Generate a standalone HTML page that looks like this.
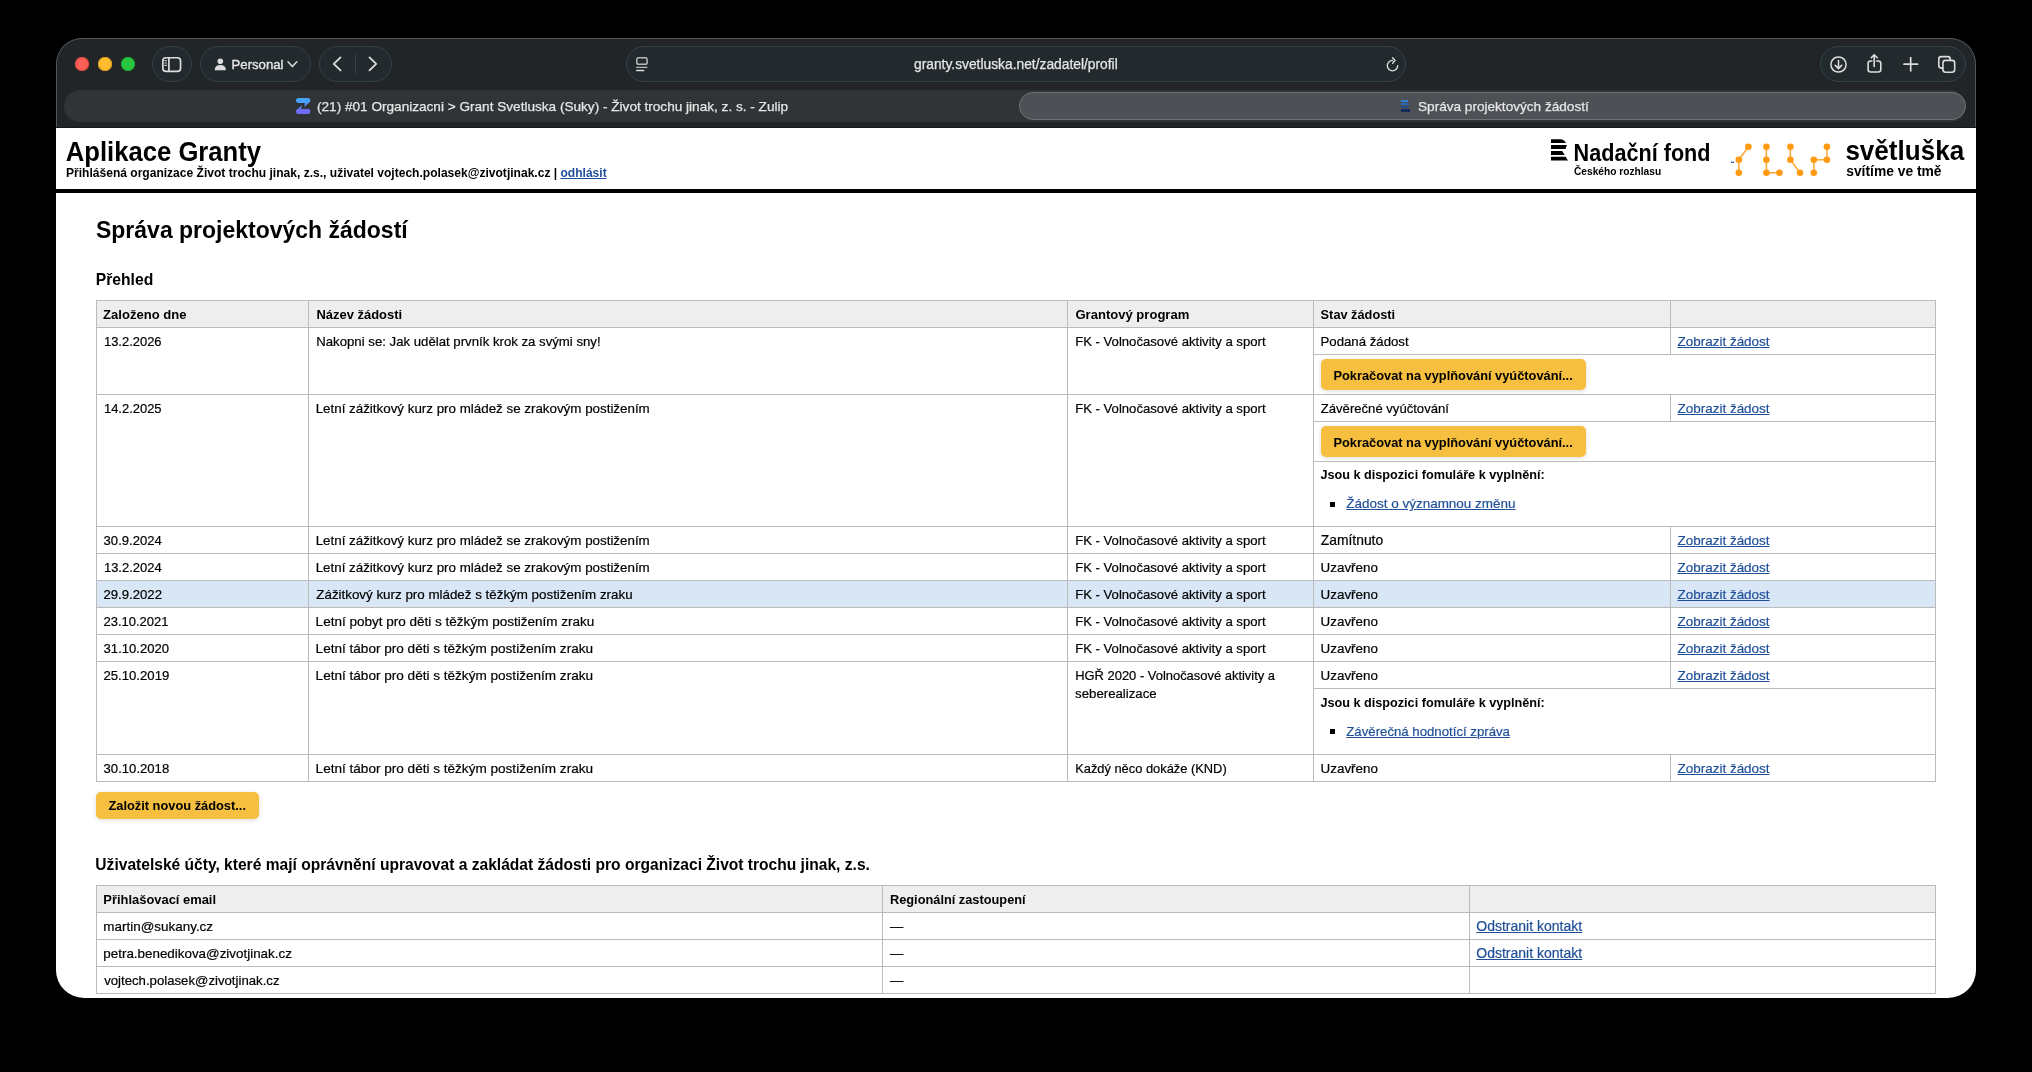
<!DOCTYPE html>
<html><head><meta charset="utf-8">
<style>
*{box-sizing:border-box;margin:0;padding:0}
html,body{width:2032px;height:1072px;background:#000;overflow:hidden;font-family:"Liberation Sans",sans-serif}
.win{will-change:transform;position:absolute;left:56px;top:38px;width:1920px;height:960px;border-radius:26px 26px 28px 28px;overflow:hidden;background:#212528}
.chrome{position:absolute;left:0;top:0;width:1920px;height:100px;background:#212528;box-shadow:inset 0 1px 0 #54585b,inset 1px 0 0 #54585b,inset -1px 0 0 #54585b;border-radius:26px 26px 0 0}
.pill{position:absolute;border:1px solid #34414a;background:#232a2d;border-radius:18px;top:8px;height:36px}
.dot{position:absolute;width:14px;height:14px;border-radius:50%;top:19px}
.content{position:absolute;left:0;top:90px;width:1920px;height:870px;background:#fff}
.a{position:absolute;white-space:nowrap}
svg{position:absolute;overflow:visible}
.ct{color:#e6e6e6;font-size:13.6px;-webkit-text-stroke:0.25px #e6e6e6}
.t{position:absolute;white-space:nowrap;color:#000}
.lk{color:#1f4f98;text-decoration:underline;text-underline-offset:1px}
.r{position:absolute}
.btn{position:absolute;background:#f6bf3f;box-shadow:0 1px 5px rgba(0,0,0,.14)}
</style></head><body>
<div class="win">
  <div class="chrome">
    <div class="dot" style="left:19px;background:#fe5f57;box-shadow:inset 0 0 0 1px #e2463f"></div>
    <div class="dot" style="left:42px;background:#febc2e;box-shadow:inset 0 0 0 1px #dfa023"></div>
    <div class="dot" style="left:65px;background:#28c840;box-shadow:inset 0 0 0 1px #1dad2b"></div>
    <div class="pill" style="left:96px;width:40px"></div>
    <div class="pill" style="left:144px;width:111px"></div>
    <div class="pill" style="left:263px;width:73px"></div>
    <div class="pill" style="left:570px;width:780px"></div>
    <div class="pill" style="left:1764px;width:146px"></div>
    <!-- tab strip -->
    <div style="position:absolute;left:8px;top:52px;width:1902px;height:32px;border-radius:16px;background:#303437"></div>
    <div style="position:absolute;left:963px;top:54px;width:947px;height:28px;border-radius:14px;background:#4d5054;border:1px solid #6c7176"></div>

    <svg width="1920" height="90" style="left:0;top:0" fill="none" stroke="#dcdcdc" stroke-linecap="round" stroke-linejoin="round">
      <!-- sidebar -->
      <rect x="106.85" y="19.75" width="17.7" height="13.6" rx="3.2" stroke-width="1.7"/>
      <line x1="112.9" y1="20" x2="112.9" y2="33" stroke-width="1.7"/>
      <g stroke-width="1.1" stroke="#bdbdbd"><line x1="108.8" y1="22.6" x2="110.6" y2="22.6"/><line x1="108.8" y1="25" x2="110.6" y2="25"/><line x1="108.8" y1="27.4" x2="110.6" y2="27.4"/></g>
      <!-- person -->
      <circle cx="164.3" cy="23.2" r="2.8" fill="#dcdcdc" stroke="none"/>
      <path d="M158.7 32.2 Q158.9 27.1 164.3 27.1 Q169.7 27.1 169.9 32.2 Z" fill="#dcdcdc" stroke="none"/>
      <!-- chevron down -->
      <path d="M232 23.8 L236.4 28.6 L240.8 23.8" stroke-width="1.5"/>
      <!-- back/forward -->
      <path d="M284.5 19.4 L277.8 25.9 L284.5 32.4" stroke-width="1.8"/>
      <line x1="299.5" y1="16.2" x2="299.5" y2="35.6" stroke="#394044" stroke-width="1"/>
      <path d="M313.5 19.4 L320.2 25.9 L313.5 32.4" stroke-width="1.8"/>
      <!-- url page icon -->
      <rect x="580.8" y="19.8" width="10.3" height="6.4" rx="1.8" stroke-width="1.5" stroke="#b8b8b8"/>
      <line x1="580.6" y1="29.4" x2="590.9" y2="29.4" stroke-width="1.3" stroke="#b8b8b8"/>
      <line x1="580.6" y1="32.5" x2="587.8" y2="32.5" stroke-width="1.3"/>
      <!-- reload -->
      <path d="M1336.5 22.4 A5.2 5.2 0 1 0 1341.7 27.6" stroke-width="1.35"/>
      <path d="M1336.6 19.7 L1339.1 22.4 L1336.6 25.3" stroke-width="1.35"/>
      <!-- download -->
      <circle cx="1782.5" cy="26.5" r="7.6" stroke-width="1.5"/>
      <path d="M1782.5 22.6 V30.4 M1779.3 27.4 L1782.5 30.6 L1785.7 27.4" stroke-width="1.5"/>
      <!-- share -->
      <path d="M1815.9 23 H1814.6 a2.5 2.5 0 0 0 -2.5 2.5 V31.5 a2.5 2.5 0 0 0 2.5 2.5 H1822.3 a2.5 2.5 0 0 0 2.5 -2.5 V25.5 a2.5 2.5 0 0 0 -2.5 -2.5 H1820.6" stroke-width="1.6"/>
      <path d="M1818.2 16.9 V28.4 M1815.2 19.8 L1818.2 16.7 L1821.2 19.8" stroke-width="1.6"/>
      <!-- plus -->
      <path d="M1848 26.2 H1861.6 M1854.7 19.5 V32.8" stroke-width="1.7"/>
      <!-- tabs -->
      <path d="M1886.9 30.1 H1885.3 a2.5 2.5 0 0 1 -2.5 -2.5 V21.1 a2.5 2.5 0 0 1 2.5 -2.5 H1891.7 a2.5 2.5 0 0 1 2.5 2.5 V22.4" stroke-width="1.6"/>
      <rect x="1886.9" y="22.4" width="11.8" height="11.8" rx="2.6" stroke-width="1.6"/>
    </svg>
    <div class="a" style="left:175.5px;top:18px;font-size:13.2px;color:#e6e6e6;-webkit-text-stroke:0.35px #e6e6e6;line-height:17px">Personal</div>
    <div class="a ct" id="url" style="left:858px;top:18px;line-height:17px;font-size:13.8px">granty.svetluska.net/zadatel/profil</div>
    <!-- tab favicons -->
    <svg width="14.4" height="16.1" style="left:239.8px;top:59.9px" viewBox="0 0 14.4 16.1">
      <rect x="0" y="0" width="14.4" height="5" rx="2.5" fill="#47a3ff"/><polygon points="8.9,4.6 14.2,3.6 8.4,8.9" fill="#5296fd"/><polygon points="5.9,7.2 5.1,11.5 0.2,12.4" fill="#5f84fa"/><rect x="0" y="11.1" width="14.4" height="5" rx="2.5" fill="#6e6cf7"/>
    </svg>
    <div class="a ct" id="tab1" style="left:261px;top:60px;line-height:17px">(21) #01 Organizacni &gt; Grant Svetluska (Suky) - Život trochu jinak, z. s. - Zulip</div>
    <svg width="10" height="13" style="left:1345px;top:62px">
      <rect x="0" y="0" width="7" height="2" fill="#2f7fd6"/>
      <rect x="0" y="3" width="8" height="2" fill="#2a65b5"/>
      <rect x="0" y="6" width="7" height="2" fill="#1e4d8f"/>
      <rect x="0" y="9" width="9" height="3" fill="#0d2a5a"/>
    </svg>
    <div class="a ct" id="tab2" style="left:1362px;top:60px;line-height:17px">Správa projektových žádostí</div>
  </div>
  <div class="content">
<div class="t" style="left:9.76px;top:10px;font-size:25.66px;line-height:28px;font-weight:bold;transform:scaleY(1.09);transform-origin:0 23px;">Aplikace Granty</div>
<div class="t" style="left:10px;top:38px;font-size:12.06px;line-height:14px;font-weight:bold">Přihlášená organizace Život trochu jinak, z.s., uživatel vojtech.polasek@zivotjinak.cz | <span class="lk">odhlásit</span></div>
<div class="r" style="left:0px;top:61px;width:1920px;height:4px;background:#000"></div>
<svg style="left:1495px;top:10px" width="20" height="24" viewBox="0 0 20 24">
<path d="M0 1.2 H9.5 Q13.3 1.2 15 5 H0 Z" fill="#000"/>
<path d="M0 7 H15.8 L14.6 11 H0 Z" fill="#000"/>
<path d="M0 13 H11.2 L13.7 17 H0 Z" fill="#000"/>
<path d="M0 18.8 H14.7 L17 22.5 H0 Z" fill="#000"/>
</svg>
<div class="t" style="left:1517.59px;top:13px;font-size:21.63px;line-height:25px;font-weight:bold;transform:scaleY(1.09);transform-origin:0 20px;">Nadační fond</div>
<div class="t" style="left:1517.99px;top:38px;font-size:10.2px;line-height:11px;font-weight:bold;">Českého rozhlasu</div>
<svg style="left:1664px;top:2px" width="120" height="55"><line x1="18.8" y1="29.8" x2="28.4" y2="16.7" stroke="#ffa733" stroke-width="1.5"/><line x1="18.8" y1="29.8" x2="18.8" y2="42.8" stroke="#ffa733" stroke-width="1.5"/><line x1="46.4" y1="16.7" x2="46.4" y2="42.8" stroke="#ffa733" stroke-width="1.5"/><line x1="46.4" y1="42.8" x2="59.4" y2="42.8" stroke="#ffa733" stroke-width="1.5"/><line x1="70.4" y1="16.7" x2="70.4" y2="29.8" stroke="#ffa733" stroke-width="1.5"/><line x1="70.4" y1="29.8" x2="80.0" y2="42.8" stroke="#ffa733" stroke-width="1.5"/><line x1="106.9" y1="16.7" x2="106.9" y2="29.8" stroke="#ffa733" stroke-width="1.5"/><line x1="106.9" y1="29.8" x2="93.8" y2="29.8" stroke="#ffa733" stroke-width="1.5"/><line x1="93.8" y1="29.8" x2="93.8" y2="42.8" stroke="#ffa733" stroke-width="1.5"/><circle cx="28.4" cy="16.7" r="3.3" fill="#ff9a12"/><circle cx="18.8" cy="29.8" r="3.3" fill="#ff9a12"/><circle cx="18.8" cy="42.8" r="3.3" fill="#ff9a12"/><circle cx="46.4" cy="16.7" r="3.3" fill="#ff9a12"/><circle cx="46.4" cy="29.8" r="3.3" fill="#ff9a12"/><circle cx="46.4" cy="42.8" r="3.3" fill="#ff9a12"/><circle cx="59.4" cy="42.8" r="3.3" fill="#ff9a12"/><circle cx="70.4" cy="16.7" r="3.3" fill="#ff9a12"/><circle cx="70.4" cy="29.8" r="3.3" fill="#ff9a12"/><circle cx="80.0" cy="42.8" r="3.3" fill="#ff9a12"/><circle cx="106.9" cy="16.7" r="3.3" fill="#ff9a12"/><circle cx="106.9" cy="29.8" r="3.3" fill="#ff9a12"/><circle cx="93.8" cy="29.8" r="3.3" fill="#ff9a12"/><circle cx="93.8" cy="42.8" r="3.3" fill="#ff9a12"/><rect x="11" y="31.6" width="3" height="1.2" fill="#1f4f98"/></svg>
<div class="t" style="left:1789.39px;top:8px;font-size:26.06px;line-height:30px;font-weight:bold;transform:scaleY(1.08);transform-origin:0 24px;">světluška</div>
<div class="t" style="left:1790.22px;top:35px;font-size:13.83px;line-height:16px;font-weight:bold;">svítíme ve tmě</div>
<div class="t" style="left:40.01px;top:89px;font-size:22.99px;line-height:26px;font-weight:bold;transform:scaleY(1.05);transform-origin:0 21px;">Správa projektových žádostí</div>
<div class="t" style="left:39.68px;top:143px;font-size:15.7px;line-height:17px;font-weight:bold;">Přehled</div>
<div class="r" style="left:40px;top:172px;width:1840px;height:28px;background:#eeeeee"></div>
<div class="r" style="left:40px;top:452px;width:1840px;height:28px;background:#d8e6f6"></div>
<div class="t" style="left:47.11px;top:179px;font-size:13.06px;line-height:15px;font-weight:bold;">Založeno dne</div>
<div class="t" style="left:260.46px;top:179px;font-size:12.96px;line-height:15px;font-weight:bold;">Název žádosti</div>
<div class="t" style="left:1019.48px;top:179px;font-size:13.06px;line-height:15px;font-weight:bold;">Grantový program</div>
<div class="t" style="left:1264.62px;top:179px;font-size:12.78px;line-height:15px;font-weight:bold;">Stav žádosti</div>
<div class="r" style="left:40px;top:172px;width:1840px;height:1px;background:#bbbbbb"></div>
<div class="r" style="left:40px;top:199px;width:1840px;height:1px;background:#bbbbbb"></div>
<div class="r" style="left:40px;top:172px;width:1px;height:482px;background:#bbbbbb"></div>
<div class="r" style="left:252px;top:172px;width:1px;height:482px;background:#bbbbbb"></div>
<div class="r" style="left:1011px;top:172px;width:1px;height:482px;background:#bbbbbb"></div>
<div class="r" style="left:1257px;top:172px;width:1px;height:482px;background:#bbbbbb"></div>
<div class="r" style="left:1879px;top:172px;width:1px;height:482px;background:#bbbbbb"></div>
<div class="r" style="left:1614px;top:172px;width:1px;height:55px;background:#bbbbbb"></div>
<div class="r" style="left:1614px;top:266px;width:1px;height:28px;background:#bbbbbb"></div>
<div class="r" style="left:1614px;top:398px;width:1px;height:163px;background:#bbbbbb"></div>
<div class="r" style="left:1614px;top:626px;width:1px;height:28px;background:#bbbbbb"></div>
<div class="r" style="left:40px;top:266px;width:1840px;height:1px;background:#bbbbbb"></div>
<div class="t" style="left:47.93px;top:206px;font-size:12.96px;line-height:15px;-webkit-text-stroke:0.2px currentColor;">13.2.2026</div>
<div class="t" style="left:260.24px;top:206px;font-size:13.19px;line-height:15px;-webkit-text-stroke:0.2px currentColor;">Nakopni se: Jak udělat prvník krok za svými sny!</div>
<div class="t" style="left:1019.15px;top:206px;font-size:13.14px;line-height:15px;-webkit-text-stroke:0.2px currentColor;">FK - Volnočasové aktivity a sport</div>
<div class="t" style="left:1264.54px;top:206px;font-size:13.21px;line-height:15px;-webkit-text-stroke:0.2px currentColor;">Podaná žádost</div>
<div class="t lk" style="left:1621.50px;top:206px;font-size:13.47px;line-height:15px;-webkit-text-stroke:0.2px currentColor;color:#1f4f98;">Zobrazit žádost</div>
<div class="r" style="left:1257px;top:226px;width:623px;height:1px;background:#bbbbbb"></div>
<div class="btn" style="left:1265px;top:231px;width:265px;height:31px;border-radius:5px"></div>
<div class="t" style="left:1277.47px;top:240px;font-size:12.82px;line-height:15px;font-weight:bold;">Pokračovat na vyplňování vyúčtování...</div>
<div class="r" style="left:40px;top:398px;width:1840px;height:1px;background:#bbbbbb"></div>
<div class="t" style="left:47.93px;top:273px;font-size:12.96px;line-height:15px;-webkit-text-stroke:0.2px currentColor;">14.2.2025</div>
<div class="t" style="left:259.63px;top:273px;font-size:13.36px;line-height:15px;-webkit-text-stroke:0.2px currentColor;">Letní zážitkový kurz pro mládež se zrakovým postižením</div>
<div class="t" style="left:1019.15px;top:273px;font-size:13.14px;line-height:15px;-webkit-text-stroke:0.2px currentColor;">FK - Volnočasové aktivity a sport</div>
<div class="t" style="left:1264.81px;top:273px;font-size:13.1px;line-height:15px;-webkit-text-stroke:0.2px currentColor;">Závěrečné vyúčtování</div>
<div class="t lk" style="left:1621.50px;top:273px;font-size:13.47px;line-height:15px;-webkit-text-stroke:0.2px currentColor;color:#1f4f98;">Zobrazit žádost</div>
<div class="r" style="left:1257px;top:293px;width:623px;height:1px;background:#bbbbbb"></div>
<div class="btn" style="left:1265px;top:298px;width:265px;height:31px;border-radius:5px"></div>
<div class="t" style="left:1277.47px;top:307px;font-size:12.82px;line-height:15px;font-weight:bold;">Pokračovat na vyplňování vyúčtování...</div>
<div class="r" style="left:1257px;top:333px;width:623px;height:1px;background:#bbbbbb"></div>
<div class="t" style="left:1264.41px;top:340px;font-size:12.67px;line-height:14px;font-weight:bold;">Jsou k dispozici fomuláře k vyplnění:</div>
<div class="r" style="left:1274px;top:374px;width:5px;height:5px;background:#000"></div>
<div class="t lk" style="left:1290.30px;top:368px;font-size:13.48px;line-height:15px;-webkit-text-stroke:0.2px currentColor;color:#1f4f98;">Žádost o významnou změnu</div>
<div class="r" style="left:40px;top:425px;width:1840px;height:1px;background:#bbbbbb"></div>
<div class="t" style="left:47.58px;top:405px;font-size:13.08px;line-height:15px;-webkit-text-stroke:0.2px currentColor;">30.9.2024</div>
<div class="t" style="left:259.63px;top:405px;font-size:13.36px;line-height:15px;-webkit-text-stroke:0.2px currentColor;">Letní zážitkový kurz pro mládež se zrakovým postižením</div>
<div class="t" style="left:1019.15px;top:405px;font-size:13.14px;line-height:15px;-webkit-text-stroke:0.2px currentColor;">FK - Volnočasové aktivity a sport</div>
<div class="t" style="left:1264.78px;top:404px;font-size:13.86px;line-height:16px;-webkit-text-stroke:0.2px currentColor;">Zamítnuto</div>
<div class="t lk" style="left:1621.50px;top:405px;font-size:13.47px;line-height:15px;-webkit-text-stroke:0.2px currentColor;color:#1f4f98;">Zobrazit žádost</div>
<div class="r" style="left:40px;top:452px;width:1840px;height:1px;background:#bbbbbb"></div>
<div class="t" style="left:47.92px;top:432px;font-size:13.0px;line-height:15px;-webkit-text-stroke:0.2px currentColor;">13.2.2024</div>
<div class="t" style="left:259.63px;top:432px;font-size:13.36px;line-height:15px;-webkit-text-stroke:0.2px currentColor;">Letní zážitkový kurz pro mládež se zrakovým postižením</div>
<div class="t" style="left:1019.15px;top:432px;font-size:13.14px;line-height:15px;-webkit-text-stroke:0.2px currentColor;">FK - Volnočasové aktivity a sport</div>
<div class="t" style="left:1264.59px;top:432px;font-size:13.42px;line-height:15px;-webkit-text-stroke:0.2px currentColor;">Uzavřeno</div>
<div class="t lk" style="left:1621.50px;top:432px;font-size:13.47px;line-height:15px;-webkit-text-stroke:0.2px currentColor;color:#1f4f98;">Zobrazit žádost</div>
<div class="r" style="left:40px;top:479px;width:1840px;height:1px;background:#bbbbbb"></div>
<div class="t" style="left:47.44px;top:459px;font-size:13.17px;line-height:15px;-webkit-text-stroke:0.2px currentColor;">29.9.2022</div>
<div class="t" style="left:260.30px;top:459px;font-size:13.37px;line-height:15px;-webkit-text-stroke:0.2px currentColor;">Zážitkový kurz pro mládež s těžkým postižením zraku</div>
<div class="t" style="left:1019.15px;top:459px;font-size:13.14px;line-height:15px;-webkit-text-stroke:0.2px currentColor;">FK - Volnočasové aktivity a sport</div>
<div class="t" style="left:1264.59px;top:459px;font-size:13.42px;line-height:15px;-webkit-text-stroke:0.2px currentColor;">Uzavřeno</div>
<div class="t lk" style="left:1621.50px;top:459px;font-size:13.47px;line-height:15px;-webkit-text-stroke:0.2px currentColor;color:#1f4f98;">Zobrazit žádost</div>
<div class="r" style="left:40px;top:506px;width:1840px;height:1px;background:#bbbbbb"></div>
<div class="t" style="left:47.45px;top:486px;font-size:13.01px;line-height:15px;-webkit-text-stroke:0.2px currentColor;">23.10.2021</div>
<div class="t" style="left:259.62px;top:486px;font-size:13.53px;line-height:15px;-webkit-text-stroke:0.2px currentColor;">Letní pobyt pro děti s těžkým postižením zraku</div>
<div class="t" style="left:1019.15px;top:486px;font-size:13.14px;line-height:15px;-webkit-text-stroke:0.2px currentColor;">FK - Volnočasové aktivity a sport</div>
<div class="t" style="left:1264.59px;top:486px;font-size:13.42px;line-height:15px;-webkit-text-stroke:0.2px currentColor;">Uzavřeno</div>
<div class="t lk" style="left:1621.50px;top:486px;font-size:13.47px;line-height:15px;-webkit-text-stroke:0.2px currentColor;color:#1f4f98;">Zobrazit žádost</div>
<div class="r" style="left:40px;top:533px;width:1840px;height:1px;background:#bbbbbb"></div>
<div class="t" style="left:47.58px;top:513px;font-size:13.1px;line-height:15px;-webkit-text-stroke:0.2px currentColor;">31.10.2020</div>
<div class="t" style="left:259.61px;top:513px;font-size:13.57px;line-height:15px;-webkit-text-stroke:0.2px currentColor;">Letní tábor pro děti s těžkým postižením zraku</div>
<div class="t" style="left:1019.15px;top:513px;font-size:13.14px;line-height:15px;-webkit-text-stroke:0.2px currentColor;">FK - Volnočasové aktivity a sport</div>
<div class="t" style="left:1264.59px;top:513px;font-size:13.42px;line-height:15px;-webkit-text-stroke:0.2px currentColor;">Uzavřeno</div>
<div class="t lk" style="left:1621.50px;top:513px;font-size:13.47px;line-height:15px;-webkit-text-stroke:0.2px currentColor;color:#1f4f98;">Zobrazit žádost</div>
<div class="r" style="left:40px;top:626px;width:1840px;height:1px;background:#bbbbbb"></div>
<div class="t" style="left:47.44px;top:540px;font-size:13.16px;line-height:15px;-webkit-text-stroke:0.2px currentColor;">25.10.2019</div>
<div class="t" style="left:259.61px;top:540px;font-size:13.57px;line-height:15px;-webkit-text-stroke:0.2px currentColor;">Letní tábor pro děti s těžkým postižením zraku</div>
<div class="t" style="left:1019.16px;top:540px;font-size:12.95px;line-height:15px;-webkit-text-stroke:0.2px currentColor;">HGŘ 2020 - Volnočasové aktivity a</div>
<div class="t" style="left:1019.10px;top:558px;font-size:13.22px;line-height:15px;-webkit-text-stroke:0.2px currentColor;">seberealizace</div>
<div class="t" style="left:1264.59px;top:540px;font-size:13.42px;line-height:15px;-webkit-text-stroke:0.2px currentColor;">Uzavřeno</div>
<div class="t lk" style="left:1621.50px;top:540px;font-size:13.47px;line-height:15px;-webkit-text-stroke:0.2px currentColor;color:#1f4f98;">Zobrazit žádost</div>
<div class="r" style="left:1257px;top:560px;width:623px;height:1px;background:#bbbbbb"></div>
<div class="t" style="left:1264.41px;top:568px;font-size:12.67px;line-height:14px;font-weight:bold;">Jsou k dispozici fomuláře k vyplnění:</div>
<div class="r" style="left:1274px;top:601px;width:5px;height:5px;background:#000"></div>
<div class="t lk" style="left:1290.30px;top:596px;font-size:13.21px;line-height:15px;-webkit-text-stroke:0.2px currentColor;color:#1f4f98;">Závěrečná hodnotící zpráva</div>
<div class="r" style="left:40px;top:653px;width:1840px;height:1px;background:#bbbbbb"></div>
<div class="t" style="left:47.58px;top:633px;font-size:13.12px;line-height:15px;-webkit-text-stroke:0.2px currentColor;">30.10.2018</div>
<div class="t" style="left:259.61px;top:633px;font-size:13.57px;line-height:15px;-webkit-text-stroke:0.2px currentColor;">Letní tábor pro děti s těžkým postižením zraku</div>
<div class="t" style="left:1019.17px;top:633px;font-size:12.86px;line-height:15px;-webkit-text-stroke:0.2px currentColor;">Každý něco dokáže (KND)</div>
<div class="t" style="left:1264.59px;top:633px;font-size:13.42px;line-height:15px;-webkit-text-stroke:0.2px currentColor;">Uzavřeno</div>
<div class="t lk" style="left:1621.50px;top:633px;font-size:13.47px;line-height:15px;-webkit-text-stroke:0.2px currentColor;color:#1f4f98;">Zobrazit žádost</div>
<div class="btn" style="left:40px;top:664px;width:163px;height:27px;border-radius:5px"></div>
<div class="t" style="left:52.41px;top:670px;font-size:12.84px;line-height:15px;font-weight:bold;">Založit novou žádost...</div>
<div class="t" style="left:39.36px;top:728px;font-size:15.59px;line-height:17px;font-weight:bold;">Uživatelské účty, které mají oprávnění upravovat a zakládat žádosti pro organizaci Život trochu jinak, z.s.</div>
<div class="r" style="left:40px;top:757px;width:1840px;height:28px;background:#eeeeee"></div>
<div class="r" style="left:40px;top:757px;width:1840px;height:1px;background:#bbbbbb"></div>
<div class="r" style="left:40px;top:784px;width:1840px;height:1px;background:#bbbbbb"></div>
<div class="r" style="left:40px;top:811px;width:1840px;height:1px;background:#bbbbbb"></div>
<div class="r" style="left:40px;top:838px;width:1840px;height:1px;background:#bbbbbb"></div>
<div class="r" style="left:40px;top:865px;width:1840px;height:1px;background:#bbbbbb"></div>
<div class="r" style="left:40px;top:757px;width:1px;height:109px;background:#bbbbbb"></div>
<div class="r" style="left:826px;top:757px;width:1px;height:109px;background:#bbbbbb"></div>
<div class="r" style="left:1413px;top:757px;width:1px;height:109px;background:#bbbbbb"></div>
<div class="r" style="left:1879px;top:757px;width:1px;height:109px;background:#bbbbbb"></div>
<div class="t" style="left:47.36px;top:764px;font-size:12.91px;line-height:15px;font-weight:bold;">Přihlašovací email</div>
<div class="t" style="left:833.97px;top:764px;font-size:12.79px;line-height:15px;font-weight:bold;">Regionální zastoupení</div>
<div class="t" style="left:47.33px;top:791px;font-size:13.45px;line-height:15px;-webkit-text-stroke:0.2px currentColor;">martin@sukany.cz</div>
<div class="t" style="left:834.00px;top:791px;font-size:13.25px;line-height:15px;-webkit-text-stroke:0.2px currentColor;">—</div>
<div class="t lk" style="left:1420.27px;top:790px;font-size:14.02px;line-height:16px;-webkit-text-stroke:0.2px currentColor;color:#1f4f98;">Odstranit kontakt</div>
<div class="t" style="left:47.33px;top:818px;font-size:13.4px;line-height:15px;-webkit-text-stroke:0.2px currentColor;">petra.benedikova@zivotjinak.cz</div>
<div class="t" style="left:834.00px;top:818px;font-size:13.25px;line-height:15px;-webkit-text-stroke:0.2px currentColor;">—</div>
<div class="t lk" style="left:1420.27px;top:817px;font-size:14.02px;line-height:16px;-webkit-text-stroke:0.2px currentColor;color:#1f4f98;">Odstranit kontakt</div>
<div class="t" style="left:48.13px;top:845px;font-size:13.2px;line-height:15px;-webkit-text-stroke:0.2px currentColor;">vojtech.polasek@zivotjinak.cz</div>
<div class="t" style="left:834.00px;top:845px;font-size:13.25px;line-height:15px;-webkit-text-stroke:0.2px currentColor;">—</div>
</div>
<div style="position:absolute;left:0;top:89px;width:1920px;height:1px;background:#15191c"></div>
</div>
</body></html>
